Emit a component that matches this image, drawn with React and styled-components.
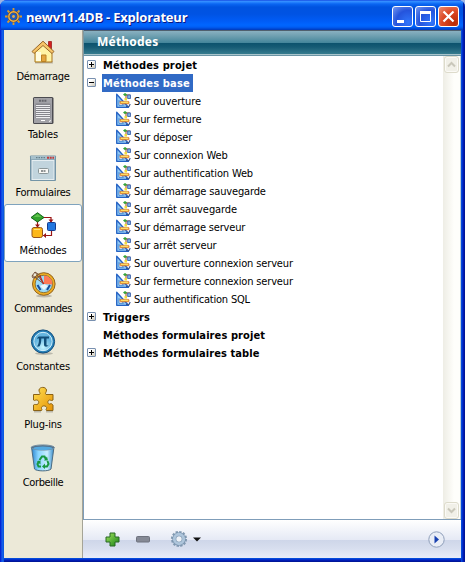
import React from 'react';
import styled, { createGlobalStyle } from 'styled-components';

const Global = createGlobalStyle`
  * { box-sizing: border-box; }
  body { margin: 0; background: #9db4e4; overflow: hidden; }
  svg { display: block; flex: none; }
`;

const ui = '"DejaVu Sans Condensed", "DejaVu Sans", sans-serif';

const Window = styled.div`
  width: 465px;
  height: 562px;
  display: flex;
  flex-direction: column;
  border-radius: 7px 7px 0 0;
  overflow: hidden;
  background: #0050e8;
  font-family: ${ui};
  font-size: 11px;
  color: #000;
`;

const TitleBar = styled.header`
  height: 30px;
  flex: none;
  display: flex;
  align-items: center;
  padding: 3px 6px 0 5px;
  background: linear-gradient(180deg, #0831d9 0, #3a93ff 1px, #2a87ff 2px, #0a66f2 4px, #0053e0 7px, #0053e3 14px, #005cf6 21px, #0066ff 25px, #005ef5 27px, #0046d0 29px, #0038b8 30px);
  box-shadow: inset 1px 0 #0831d9, inset -2px 0 #001da0;
`;

const Title = styled.h1`
  margin: 0 auto 0 4px;
  padding-top: 1px;
  font: bold 13px/18px "Open Sans", "Noto Sans", sans-serif;
  letter-spacing: -0.22px;
  color: #fff;
  text-shadow: 1px 1px 0 #0a1883;
  white-space: nowrap;
`;

const CaptionButton = styled.button`
  width: 21px;
  height: 21px;
  margin-left: 2px;
  padding: 0;
  display: flex;
  align-items: center;
  justify-content: center;
  border: 1px solid #fff;
  border-radius: 3px;
  background: ${p => p.$close
    ? 'radial-gradient(circle at 80% 85%, #b82a06, #dd4a26 55%, #eb8d72)'
    : 'radial-gradient(circle at 80% 80%, #3075fb, #2554dc 55%, #7698f0)'};
`;

const Main = styled.div`
  flex: 1;
  min-height: 0;
  display: flex;
  padding: 0 4px 4px;
  background:
    linear-gradient(90deg, #0019cf 0, #0831d9 1px, #1660ec 2px, #0855dd 4px, transparent 4px) left / 4px 100% no-repeat,
    linear-gradient(90deg, #0855dd 0, #0241d8 1px, #001ec0 2px, #00138c 4px) right / 4px 100% no-repeat,
    linear-gradient(180deg, #0855dd 0, #0241d8 1px, #001ec0 2px, #00138c 4px) bottom / 100% 4px no-repeat;
`;

const Sidebar = styled.nav`
  width: 79px;
  flex: none;
  background: #ece9d8;
  border-right: 1px solid #a5a497;
`;

const SideItem = styled.div`
  height: 58px;
  width: 78px;
  display: flex;
  flex-direction: column;
  align-items: center;
  padding-top: 7px;
  border: 1px solid ${p => (p.$active ? '#7fa3bd' : 'transparent')};
  border-radius: 3px;
  background: ${p => (p.$active ? '#fff' : 'transparent')};
`;

const SideLabel = styled.span`
  margin-top: 4px;
  line-height: 14px;
  letter-spacing: ${p => p.$ls}px;
  white-space: nowrap;
`;

const Content = styled.section`
  flex: 1;
  min-width: 0;
  display: flex;
  flex-direction: column;
`;

const Heading = styled.h2`
  margin: 0;
  height: 26px;
  flex: none;
  padding-left: 13px;
  font: bold 12px/24px "Noto Sans", "Open Sans", sans-serif;
  letter-spacing: 0.2px;
  color: #fff;
  border-left: 1px solid #7d98a2;
  background: linear-gradient(180deg, #50606e 0, #50606e 1px, #8ab1c1 1px, #6e9fb0 6px, #43859a 13px, #0c526d 13px, #165b74 17px, #357b8e 24px, #a9c5cc 24px, #a9c5cc 25px, #6a94a4 25px);
`;

const ListArea = styled.div`
  flex: 1;
  min-height: 0;
  display: flex;
  background: #fff;
  border-left: 1px solid #7f9db9;
  border-bottom: 1px solid #7f9db9;
`;

const Tree = styled.div`
  flex: 1;
  padding-left: 3px;
`;

const Row = styled.div`
  height: 18px;
  display: flex;
  align-items: center;
  padding-left: ${p => (p.$child ? 28 : 0)}px;
`;

const Toggle = styled.span`
  width: 9px;
  height: 9px;
  flex: none;
  display: flex;
  margin-bottom: 1px;
  visibility: ${p => (p.$hidden ? 'hidden' : 'visible')};
  border: 1px solid #7890b0;
  border-radius: 1px;
  background: linear-gradient(135deg, #fff 35%, #cac5b5);
`;

const GroupLabel = styled.span`
  height: 18px;
  margin-left: 6px;
  padding: 1px 3px 0 1px;
  font-weight: bold;
  line-height: 18px;
  letter-spacing: ${p => p.$ls}px;
  white-space: nowrap;
  color: ${p => (p.$selected ? '#fff' : '#000')};
  background: ${p => (p.$selected ? '#316ac5' : 'transparent')};
`;

const ChildLabel = styled.span`
  margin-left: 3px;
  line-height: 17px;
  letter-spacing: ${p => p.$ls}px;
  white-space: nowrap;
`;

const ScrollBar = styled.div`
  width: 18px;
  display: flex;
  flex-direction: column;
  justify-content: space-between;
  background: linear-gradient(90deg, #eeede5, #fefefb 65%, #fefefb);
  border-right: 1px solid #b9cbd8;
`;

const ScrollButton = styled.div`
  height: 17px;
  margin: 0 1px;
  display: flex;
  align-items: center;
  justify-content: center;
  border: 1px solid #dddbcb;
  border-radius: 3px;
  background: #f1f0e8;
  box-shadow: inset 0 0 0 1px #fbfaf6;
`;

const BottomBar = styled.footer`
  height: 38px;
  flex: none;
  display: flex;
  align-items: center;
  padding: 0 16px 0 22px;
  background: linear-gradient(180deg, #fff 0, #e5e9f5 20px, #ced6e9 20px, #d7deee 28px, #e7ecf9 38px);
`;

const Tools = styled.div`
  flex: 1;
  display: flex;
  align-items: center;
  gap: 15px;
`;

const GearMenu = styled.div`
  display: flex;
  align-items: center;
  gap: 5px;
  margin-left: 4px;
`;

const HomeIcon = () => (
  <svg width="28" height="28" viewBox="0 0 28 28">
    <path d="M6 24.500h18" stroke="#bdb9a9" strokeWidth="2" />
    <path d="M19.500 3.500h3v8h-3z" fill="#d42020" stroke="#941010" strokeWidth=".7" />
    <path d="M6 12.500l8-8 9 8V24H6z" fill="#fff3a4" stroke="#aa741c" />
    <path d="M7 14h5v9H7z" fill="#fffce0" />
    <path d="M3 13.500L14 3.200 25 13.500l-2 2L14 7.500 5 15.500z" fill="#f7c568" stroke="#98672a" />
    <path d="M12.500 23.500V17h4.500v6.500z" fill="#e5a63e" stroke="#ba8123" />
  </svg>
);

const TableIcon = () => (
  <svg width="28" height="28" viewBox="0 0 28 28">
    <rect x="4" y="1" width="20.500" height="27" rx="1.500" fill="#4b4b50" />
    <rect x="5" y="2" width="18" height="25" fill="#a1a1a6" />
    <path d="M10 4.800h8" stroke="#66666c" strokeWidth="2" strokeDasharray="2 .7" />
    <rect x="6.500" y="7.500" width="15" height="14.500" fill="#85858b" />
    <path d="M7 9.500h14M7 11.500h14M7 13.500h14M7 15.500h14M7 17.500h14M7 19.500h14M7 21.500h14" stroke="#eeeef0" strokeWidth="1" />
    <path d="M12 24.500h4" stroke="#fff" /><path d="M20 25.500l2-1" stroke="#fff" />
  </svg>
);

const FormIcon = () => (
  <svg width="28" height="28" viewBox="0 0 28 28">
    <rect x="1" y="1.500" width="26" height="25.500" rx="1" fill="#7495a7" />
    <rect x="2" y="2" width="24" height="3.500" fill="#a6c0cb" />
    <path d="M7 3.700h10" stroke="#58717d" strokeDasharray="1.500 1" />
    <path d="M18 3.700h7" stroke="#c33b3b" strokeWidth="2" strokeDasharray="2 .7" />
    <rect x="2.500" y="6" width="23" height="20" fill="#e6eef1" />
    <rect x="3.500" y="7" width="21" height="18" fill="#c1d4dd" />
    <rect x="9.500" y="14.500" width="10" height="5" rx="1" fill="#f8f8f5" stroke="#8a9699" />
    <path d="M12 17h5" stroke="#6d7375" strokeWidth="1.600" strokeDasharray="2 .5" />
  </svg>
);

const MethodIcon = () => (
  <svg width="28" height="28" viewBox="0 0 28 28">
    <path d="M8.500 9v8M13 5.500h9v7M22.500 18v5.500h-9" fill="none" stroke="#9a1515" strokeWidth="1.200" />
    <path d="M6 12.500l2.500 3 2.500-3M19.500 7.500l2.500 3 2.500-3M17 21l-3 2.500 3 2.500" fill="#9a1515" />
    <path d="M2 5.500L8.500.7 15 5.500 8.500 10z" fill="#34a52e" stroke="#12651a" />
    <path d="M4.500 5L8.500 2l4 3z" fill="#70d05a" opacity=".7" />
    <rect x="18.500" y="10.500" width="8" height="8" rx="1" fill="#2277df" stroke="#153c8e" />
    <rect x="3" y="15.500" width="10.500" height="10" rx="2" fill="#fcb719" stroke="#94531b" />
    <path d="M5 17.500h6" stroke="#ffe17b" />
  </svg>
);

const CommandIcon = () => (
  <svg width="28" height="28" viewBox="0 0 28 28">
    <ellipse cx="15" cy="26" rx="8" ry="1.500" fill="#bcb8aa" />
    <circle cx="14.800" cy="14" r="11.300" fill="#efad22" stroke="#916421" />
    <circle cx="14.800" cy="14" r="8.700" fill="#9bdaf7" stroke="#8e7330" />
    <path d="M15 14V5.500a8.500 8.500 0 0 1 8.500 9z" fill="#ff7957" />
    <path d="M8.500 15l3 5M21 15l-3 5" stroke="#164d9b" strokeWidth="2" />
    <path d="M11 16l4-2 4 2-4 4z" fill="#ecf7fd" />
    <path d="M3 5l12 9M6 2l9 12M3 6l3-4 6 4-8 2z" fill="none" stroke="#77523b" strokeWidth="1" />
    <path d="M11 6l3.500 8" stroke="#ba2620" strokeWidth="1.300" />
  </svg>
);

const PiIcon = () => (
  <svg width="28" height="28" viewBox="0 0 28 28">
    <defs><radialGradient id="pi" cx=".5" cy=".8"><stop stopColor="#c4f4ff" /><stop offset="1" stopColor="#65b5df" /></radialGradient></defs>
    <ellipse cx="15" cy="25.500" rx="9" ry="1.500" fill="#bbb9ac" />
    <circle cx="14" cy="13.500" r="11.600" fill="#2580b7" stroke="#164e7c" />
    <circle cx="14" cy="13.500" r="9.200" fill="url(#pi)" stroke="#d4effa" />
    <path d="M8 11c.5-2 1.500-2.500 3-2.500h9v2h-2.500v6c0 1.500 1.200 1 2 .3-.3 2.300-4.500 3-4.500-.3v-6h-2.700c0 4-.7 6.500-2 8H8c1.700-2.200 2-4.500 2-8-.8 0-1.300 0-2 .5z" fill="#124f79" />
  </svg>
);

const PluginIcon = () => (
  <svg width="28" height="28" viewBox="0 0 28 28">
    <defs><linearGradient id="pz" x2="1" y2="1"><stop stopColor="#ffe052" /><stop offset="1" stopColor="#e69206" /></linearGradient></defs>
    <path d="M5 25.500h7M17 25.500h7" stroke="#bbb8aa" strokeWidth="2" />
    <path d="M4.500 8.500h6C12 7 9.700 6 10 4c.5-3.500 7-3.500 7.500 0 .3 2-2 3-.5 4.500h7V14c-2 1.500-3-1-4.500.5-1.500 2 0 4 1.500 3.500 1.500-.8 2 0 3 1v5.500h-6.500c-1.500-1 1.500-2.500-.5-4-2.500-1.500-5 0-4.500 2 .3 1 1 1.500 0 2H4.500V19c1.500-1.500 3 .5 4.500-1s.5-4-1.500-4c-1.500 0-2 1-3 0z" fill="url(#pz)" stroke="#8a6215" strokeLinejoin="round" />
  </svg>
);

const TrashIcon = () => (
  <svg width="28" height="28" viewBox="0 0 28 28">
    <defs><linearGradient id="tr"><stop stopColor="#2b83ce" /><stop offset=".3" stopColor="#88d5ff" /><stop offset=".7" stopColor="#c8eeff" /><stop offset="1" stopColor="#348ac9" /></linearGradient></defs>
    <path d="M2.500 3l3 22c2 2.500 14.500 2.500 16.500 0l3-22z" fill="url(#tr)" stroke="#4c6c82" />
    <ellipse cx="13.800" cy="3.500" rx="11.500" ry="2.600" fill="#55718a" stroke="#7891a3" />
    <ellipse cx="13.800" cy="4.200" rx="9.500" ry="1.700" fill="#54a9e0" />
    <path d="M10.500 16l2.500-3.500h2.500l1.500 3M18.500 17l1 3-1.500 2.500h-3M12 22.500H9.500l-1-2.500 1.500-3" fill="none" stroke="#189840" strokeWidth="2" />
    <path d="M15 16.500h4l-1-4M16 19.500l-3 3 3 2.500M8 17.500l3.500-1v4z" fill="#189840" />
  </svg>
);

const BaseIcon = () => (
  <svg width="16" height="16" viewBox="0 0 16 16">
    <path d="M1.700 1.200L13.500 14.300H1.700z" fill="#8fc8f5" stroke="#2462c4" strokeWidth="1.300" strokeLinejoin="round" />
    <path d="M4 7.500l4.500 4.800H4z" fill="#fff" stroke="#2d76ca" strokeWidth=".8" />
    <path d="M11 7V2h4" fill="none" stroke="#9a4a27" strokeWidth="1" />
    <path d="M8 1.500L10 0l2.200 1.500L10 3.300z" fill="#35a53a" />
    <rect x="12.700" y="2" width="2.800" height="3.500" fill="#7bb7e9" stroke="#3559a4" strokeWidth=".8" />
    <rect x="9.500" y="5" width="2.500" height="2.500" fill="#efdc3d" />
    <rect x="5" y="8.400" width="9" height="2.400" rx=".7" fill="#f9bd35" stroke="#d0601f" strokeWidth=".7" />
    <path d="M6 9.200h7" stroke="#ffe978" />
    <path d="M11 13.500h3l1.200-2.500" fill="none" stroke="#39558d" strokeWidth="1.200" />
  </svg>
);

const Cog = ({ size, teeth, body, edge, hole }) => (
  <svg width={size} height={size} viewBox="0 0 18 18">
    <circle cx="9" cy="9" r="7" fill="none" stroke={teeth} strokeWidth="2.200" strokeDasharray="2.345 1.320" />
    <circle cx="9" cy="9" r="4.700" fill={hole} stroke={edge} strokeWidth="4" />
    <circle cx="9" cy="9" r="4.700" fill="none" stroke={body} strokeWidth="2.900" />
  </svg>
);

const AppIcon = () => (
  <svg width="17" height="17" viewBox="0 0 17 17">
    <path d="M8.500 0v17M0 8.500h17M2.500 2.500l12 12M14.500 2.500l-12 12" stroke="#d59a32" strokeWidth="1.800" />
    <circle cx="8.500" cy="8.500" r="4.700" fill="#1d5cc0" stroke="#744b26" strokeWidth="2.600" />
    <circle cx="8.500" cy="8.500" r="4.700" fill="none" stroke="#f0b64b" strokeWidth="1.400" />
    <circle cx="8.500" cy="8.500" r="1.400" fill="#e6ad49" />
  </svg>
);

const sections = [
  { name: 'Démarrage', Icon: HomeIcon, ls: -0.3 },
  { name: 'Tables', Icon: TableIcon, ls: -0.1 },
  { name: 'Formulaires', Icon: FormIcon, ls: -0.25 },
  { name: 'Méthodes', Icon: MethodIcon, ls: -0.2, active: true },
  { name: 'Commandes', Icon: CommandIcon, ls: -0.5 },
  { name: 'Constantes', Icon: PiIcon, ls: -0.2 },
  { name: 'Plug-ins', Icon: PluginIcon, ls: -0.2 },
  { name: 'Corbeille', Icon: TrashIcon, ls: -0.35 },
];

const groups = [
  { name: 'Méthodes projet', ls: 0.15, state: 'closed' },
  {
    name: 'Méthodes base', ls: 0.17, state: 'open', selected: true,
    children: [
      ['Sur ouverture', -0.1],
      ['Sur fermeture', -0.12],
      ['Sur déposer', -0.15],
      ['Sur connexion Web', -0.1],
      ['Sur authentification Web', -0.15],
      ['Sur démarrage sauvegarde', -0.15],
      ['Sur arrêt sauvegarde', -0.08],
      ['Sur démarrage serveur', -0.18],
      ['Sur arrêt serveur', -0.1],
      ['Sur ouverture connexion serveur', -0.13],
      ['Sur fermeture connexion serveur', -0.16],
      ['Sur authentification SQL', -0.2],
    ],
  },
  { name: 'Triggers', ls: 0.2, state: 'closed' },
  { name: 'Méthodes formulaires projet', ls: 0.09, state: 'none' },
  { name: 'Méthodes formulaires table', ls: 0.07, state: 'closed' },
];

export default function App() {
  return (
    <>
      <Global />
      <Window>
        <TitleBar>
          <AppIcon />
          <Title>newv11.4DB - Explorateur</Title>
          <CaptionButton aria-label="Réduire">
            <svg width="19" height="19"><path d="M4 14.500h7" stroke="#fff" strokeWidth="3" /></svg>
          </CaptionButton>
          <CaptionButton aria-label="Agrandir">
            <svg width="19" height="19"><path d="M4.500 5v9.500h10V5" fill="none" stroke="#fff" /><path d="M4 5.500h11" stroke="#fff" strokeWidth="3" /></svg>
          </CaptionButton>
          <CaptionButton $close aria-label="Fermer">
            <svg width="19" height="19"><path d="M4.500 4.500l10 10M14.500 4.500l-10 10" stroke="#fff" strokeWidth="2.200" /></svg>
          </CaptionButton>
        </TitleBar>
        <Main>
          <Sidebar>
            {sections.map(({ name, Icon, ls, active }) => (
              <SideItem key={name} $active={active}>
                <Icon />
                <SideLabel $ls={ls}>{name}</SideLabel>
              </SideItem>
            ))}
          </Sidebar>
          <Content>
            <Heading>Méthodes</Heading>
            <ListArea>
              <Tree>
                {groups.map(group => (
                  <React.Fragment key={group.name}>
                    <Row>
                      <Toggle $hidden={group.state === 'none'}>
                        <svg width="7" height="7">
                          <path d={group.state === 'open' ? 'M1 3.500h5' : 'M1 3.500h5M3.500 1v5'} stroke="#000" />
                        </svg>
                      </Toggle>
                      <GroupLabel $ls={group.ls} $selected={group.selected}>{group.name}</GroupLabel>
                    </Row>
                    {(group.children || []).map(([name, ls]) => (
                      <Row $child key={name}>
                        <BaseIcon />
                        <ChildLabel $ls={ls}>{name}</ChildLabel>
                      </Row>
                    ))}
                  </React.Fragment>
                ))}
              </Tree>
              <ScrollBar>
                <ScrollButton>
                  <svg width="9" height="7"><path d="M1 5.500l3.500-3.500L8 5.500" fill="none" stroke="#c9c7ba" strokeWidth="2" /></svg>
                </ScrollButton>
                <ScrollButton>
                  <svg width="9" height="7"><path d="M1 1.500L4.500 5 8 1.500" fill="none" stroke="#c9c7ba" strokeWidth="2" /></svg>
                </ScrollButton>
              </ScrollBar>
            </ListArea>
            <BottomBar>
              <Tools>
                <svg width="15" height="15">
                  <defs><linearGradient id="plus" x2="1" y2="1"><stop stopColor="#a2e45c" /><stop offset="1" stopColor="#168117" /></linearGradient></defs>
                  <path d="M5 1h5v4h4v5h-4v4H5v-4H1V5h4z" fill="url(#plus)" stroke="#286824" strokeLinejoin="round" />
                </svg>
                <svg width="16" height="7"><rect x="1.500" y=".5" width="13" height="5.500" rx="1" fill="#858995" stroke="#6e727e" /></svg>
                <GearMenu>
                  <Cog size={18} teeth="#8299b1" body="#aec5db" edge="#7691ac" hole="#edf1f7" />
                  <svg width="8" height="5"><path d="M0 .5h8L4 4.500z" fill="#111" /></svg>
                </GearMenu>
              </Tools>
              <svg width="17" height="17">
                <circle cx="8.500" cy="8.500" r="7.700" fill="#e9edf6" stroke="#8f9fba" />
                <path d="M6.500 4.500l4.500 4-4.500 4z" fill="#1740b0" />
              </svg>
            </BottomBar>
          </Content>
        </Main>
      </Window>
    </>
  );
}
